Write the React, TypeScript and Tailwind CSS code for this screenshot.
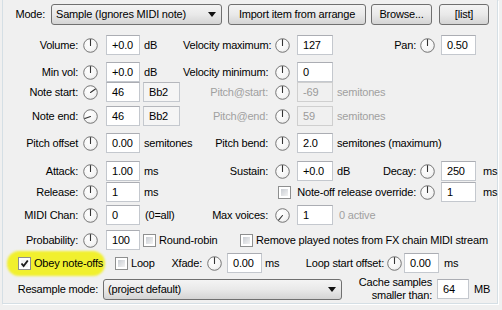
import React from "react";

type KnobProps = { angle?: number; className?: string };

function Knob({ angle = 0, className = "" }: KnobProps) {
  const rad = (angle * Math.PI) / 180;
  const x = 7.5 + Math.sin(rad) * 6;
  const y = 7.5 - Math.cos(rad) * 6;
  return (
    <svg width="15" height="15" viewBox="0 0 15 15" className={`shrink-0 ${className}`}>
      <defs>
        <radialGradient id="knobfill" cx="40%" cy="35%" r="75%">
          <stop offset="0%" stopColor="#ffffff" />
          <stop offset="70%" stopColor="#f4f4f4" />
          <stop offset="100%" stopColor="#d8d8d8" />
        </radialGradient>
      </defs>
      <circle cx="7.5" cy="7.5" r="6.8" fill="url(#knobfill)" stroke="#777" strokeWidth="1" />
      <line x1="7.5" y1="7.5" x2={x} y2={y} stroke="#333" strokeWidth="1.1" strokeLinecap="round" />
    </svg>
  );
}

type FieldProps = {
  value: string;
  className?: string;
  disabled?: boolean;
  readOnly?: boolean;
};

function Field({ value, className = "", disabled = false, readOnly = false }: FieldProps) {
  let look = "bg-white border-[#c4c8ce] border-t-[#abadb3]";
  if (disabled) look = "bg-[#f0f0f0] text-[#9a9a9a] border-[#cfcfcf]";
  if (readOnly) look = "bg-[#f5f5f5] border-[#c4c8ce] border-t-[#b5b7bc]";
  return (
    <div className={`h-[20px] shrink-0 border pl-[5px] flex items-center whitespace-nowrap ${look} ${className}`}>
      {value}
    </div>
  );
}

function Label({
  children,
  className = "",
  gray = false,
}: {
  children: React.ReactNode;
  className?: string;
  gray?: boolean;
}) {
  return (
    <div className={`shrink-0 text-right whitespace-nowrap ${gray ? "text-[#a0a0a0]" : ""} ${className}`}>
      {children}
    </div>
  );
}

function Check({ checked = false, className = "" }: { checked?: boolean; className?: string }) {
  return (
    <div className={`w-[13px] h-[13px] shrink-0 border border-[#8e8f8f] bg-white p-[2px] ${className}`}>
      <div
        className={`w-full h-full relative ${
          checked ? "bg-[#f4f4f4]" : "bg-linear-to-br from-[#c9cdd3] to-[#f3f3f3]"
        }`}
      >
        {checked && (
          <svg width="9" height="9" viewBox="0 0 9 9" className="absolute -left-[1px] -top-[1px]">
            <path d="M1.5 4.5 L3.6 7 L7.8 1.5" fill="none" stroke="#1c1c1c" strokeWidth="1.9" />
          </svg>
        )}
      </div>
    </div>
  );
}

function Btn({ children, className = "" }: { children: React.ReactNode; className?: string }) {
  return (
    <div
      className={`h-[21px] shrink-0 rounded-[3px] border border-[#707070] bg-linear-to-b from-[#f4f4f4] via-[#e9e9e9] to-[#d4d4d4] flex items-center justify-center whitespace-nowrap ${className}`}
    >
      {children}
    </div>
  );
}

function Select({ value, className = "" }: { value: string; className?: string }) {
  return (
    <div
      className={`h-[21px] shrink-0 rounded-[3px] border border-[#707070] bg-linear-to-b from-[#f4f4f4] via-[#e9e9e9] to-[#d4d4d4] flex items-center pl-[4px] pr-[5px] ${className}`}
    >
      <span className="flex-1 whitespace-nowrap">{value}</span>
      <svg width="8" height="5" viewBox="0 0 8 5">
        <path d="M0 0 H8 L4 5 Z" fill="#111" />
      </svg>
    </div>
  );
}

export default function App() {
  return (
    <div className="w-[502px] h-[310px] bg-[#f0f0f0] relative overflow-hidden font-['Liberation_Sans',Arial,sans-serif] text-[11px] text-black tracking-[-0.2px]">
      {/* yellow marker over Obey note-offs */}
      <div className="absolute left-[7px] top-[251px] w-[98px] h-[25px] rounded-[12px] bg-[#f1f02e] blur-[1px]" />

      <div className="relative ml-[2px] w-[496px] h-[304px] border-x border-b border-[#d5dfe5] shadow-[1px_1px_0_#ffffff] flex flex-col pt-[4px]">
        {/* Mode */}
        <div className="flex items-center h-[21px]">
          <Label className="w-[42px]">Mode:</Label>
          <Select value="Sample (Ignores MIDI note)" className="ml-[6px] w-[171px]" />
          <Btn className="ml-[6px] w-[138px]">Import item from arrange</Btn>
          <Btn className="ml-[5px] w-[61px]">Browse...</Btn>
          <Btn className="ml-[7px] w-[50px]">[list]</Btn>
        </div>

        {/* Volume */}
        <div className="flex items-center h-[20px] mt-[10px]">
          <div className="w-[180px] flex items-center shrink-0">
            <Label className="w-[75px]">Volume:</Label>
            <Knob className="ml-[5px]" />
            <Field value="+0.0" className="ml-[8px] w-[34px]" />
            <span className="ml-[4px]">dB</span>
          </div>
          <div className="w-[185px] flex items-center shrink-0">
            <Label className="w-[85px]">Velocity maximum:</Label>
            <Knob className="ml-[7px]" />
            <Field value="127" className="ml-[7px] w-[36px]" />
          </div>
          <Label className="w-[48px]">Pan:</Label>
          <Knob className="ml-[4px]" />
          <Field value="0.50" className="ml-[6px] w-[35px]" />
        </div>

        {/* Min vol */}
        <div className="flex items-center h-[20px] mt-[7px]">
          <div className="w-[180px] flex items-center shrink-0">
            <Label className="w-[75px]">Min vol:</Label>
            <Knob className="ml-[5px]" />
            <Field value="+0.0" className="ml-[8px] w-[34px]" />
            <span className="ml-[4px]">dB</span>
          </div>
          <div className="w-[185px] flex items-center shrink-0">
            <Label className="w-[85px]">Velocity minimum:</Label>
            <Knob className="ml-[7px]" />
            <Field value="0" className="ml-[7px] w-[36px]" />
          </div>
        </div>

        {/* Note start */}
        <div className="flex items-center h-[20px]">
          <div className="w-[180px] flex items-center shrink-0">
            <Label className="w-[75px]">Note start:</Label>
            <Knob angle={55} className="ml-[5px]" />
            <Field value="46" className="ml-[8px] w-[34px]" />
            <Field value="Bb2" readOnly className="ml-[3px] w-[37px]" />
          </div>
          <div className="w-[185px] flex items-center shrink-0">
            <Label gray className="w-[85px]">Pitch@start:</Label>
            <Knob className="ml-[7px]" />
            <Field value="-69" disabled className="ml-[7px] w-[36px]" />
            <span className="ml-[4px] text-[#a0a0a0]">semitones</span>
          </div>
        </div>

        {/* Note end */}
        <div className="flex items-center h-[20px] mt-[4px]">
          <div className="w-[180px] flex items-center shrink-0">
            <Label className="w-[75px]">Note end:</Label>
            <Knob angle={-110} className="ml-[5px]" />
            <Field value="46" className="ml-[8px] w-[34px]" />
            <Field value="Bb2" readOnly className="ml-[3px] w-[37px]" />
          </div>
          <div className="w-[185px] flex items-center shrink-0">
            <Label gray className="w-[85px]">Pitch@end:</Label>
            <Knob className="ml-[7px]" />
            <Field value="59" disabled className="ml-[7px] w-[36px]" />
            <span className="ml-[4px] text-[#a0a0a0]">semitones</span>
          </div>
        </div>

        {/* Pitch offset */}
        <div className="flex items-center h-[20px] mt-[7px]">
          <div className="w-[180px] flex items-center shrink-0">
            <Label className="w-[75px]">Pitch offset</Label>
            <Knob className="ml-[5px]" />
            <Field value="0.00" className="ml-[8px] w-[34px]" />
            <span className="ml-[4px]">semitones</span>
          </div>
          <div className="w-[185px] flex items-center shrink-0">
            <Label className="w-[85px]">Pitch bend:</Label>
            <Knob className="ml-[7px]" />
            <Field value="2.0" className="ml-[7px] w-[36px]" />
            <span className="ml-[4px] whitespace-nowrap">semitones (maximum)</span>
          </div>
        </div>

        {/* Attack */}
        <div className="flex items-center h-[20px] mt-[8px]">
          <div className="w-[180px] flex items-center shrink-0">
            <Label className="w-[75px]">Attack:</Label>
            <Knob className="ml-[5px]" />
            <Field value="1.00" className="ml-[8px] w-[34px]" />
            <span className="ml-[4px]">ms</span>
          </div>
          <div className="w-[185px] flex items-center shrink-0">
            <Label className="w-[85px]">Sustain:</Label>
            <Knob className="ml-[7px]" />
            <Field value="+0.0" className="ml-[7px] w-[36px]" />
            <span className="ml-[4px]">dB</span>
          </div>
          <Label className="w-[48px]">Decay:</Label>
          <Knob className="ml-[4px]" />
          <Field value="250" className="ml-[6px] w-[35px]" />
          <span className="ml-[7px]">ms</span>
        </div>

        {/* Release */}
        <div className="flex items-center h-[20px] mt-[1px]">
          <div className="w-[180px] flex items-center shrink-0">
            <Label className="w-[75px]">Release:</Label>
            <Knob className="ml-[5px]" />
            <Field value="1" className="ml-[8px] w-[34px]" />
            <span className="ml-[4px]">ms</span>
          </div>
          <div className="w-[233px] flex items-center shrink-0">
            <Check className="ml-[95px]" />
            <span className="flex-1 text-right whitespace-nowrap">Note-off release override:</span>
          </div>
          <Knob className="ml-[4px]" />
          <Field value="1" className="ml-[6px] w-[35px]" />
          <span className="ml-[7px]">ms</span>
        </div>

        {/* MIDI Chan */}
        <div className="flex items-center h-[20px] mt-[3px]">
          <div className="w-[180px] flex items-center shrink-0">
            <Label className="w-[75px]">MIDI Chan:</Label>
            <Knob className="ml-[5px]" />
            <Field value="0" className="ml-[8px] w-[34px]" />
            <span className="ml-[5px] whitespace-nowrap">(0=all)</span>
          </div>
          <div className="w-[185px] flex items-center shrink-0">
            <Label className="w-[85px]">Max voices:</Label>
            <Knob angle={-140} className="ml-[7px]" />
            <Field value="1" className="ml-[7px] w-[36px]" />
            <span className="ml-[6px] text-[#a0a0a0] whitespace-nowrap">0 active</span>
          </div>
        </div>

        {/* Probability */}
        <div className="flex items-center h-[20px] mt-[5px]">
          <Label className="w-[75px]">Probability:</Label>
          <Knob className="ml-[5px]" />
          <Field value="100" className="ml-[8px] w-[34px]" />
          <div className="w-[97px] ml-[3px] flex items-center shrink-0">
            <Check />
            <span className="ml-[3px] whitespace-nowrap">Round-robin</span>
          </div>
          <Check />
          <span className="ml-[3px] whitespace-nowrap">Remove played notes from FX chain MIDI stream</span>
        </div>

        {/* Obey note-offs */}
        <div className="flex items-center h-[20px] mt-[3px]">
          <div className="w-[112px] flex items-center shrink-0">
            <Check checked className="ml-[15px]" />
            <span className="ml-[3px] whitespace-nowrap">Obey note-offs</span>
          </div>
          <div className="w-[45px] flex items-center shrink-0">
            <Check />
            <span className="ml-[3px]">Loop</span>
          </div>
          <div className="w-[130px] flex items-center shrink-0">
            <Label className="w-[42px]">Xfade:</Label>
            <Knob className="ml-[5px]" />
            <Field value="0.00" className="ml-[5px] w-[35px]" />
            <span className="ml-[3px]">ms</span>
          </div>
          <Label className="w-[94px]">Loop start offset:</Label>
          <Knob className="ml-[3px]" />
          <Field value="0.00" className="ml-[2px] w-[35px]" />
          <span className="ml-[5px]">ms</span>
        </div>

        {/* Resample mode */}
        <div className="flex items-center h-[20px] mt-[6px]">
          <Label className="w-[95px]">Resample mode:</Label>
          <Select value="(project default)" className="ml-[5px] w-[239px]" />
          <div className="w-[90px] shrink-0 text-right leading-[13px] whitespace-nowrap">
            Cache samples
            <br />
            smaller than:
          </div>
          <Field value="64" className="ml-[5px] w-[32px]" />
          <span className="ml-[5px]">MB</span>
        </div>
      </div>
    </div>
  );
}
